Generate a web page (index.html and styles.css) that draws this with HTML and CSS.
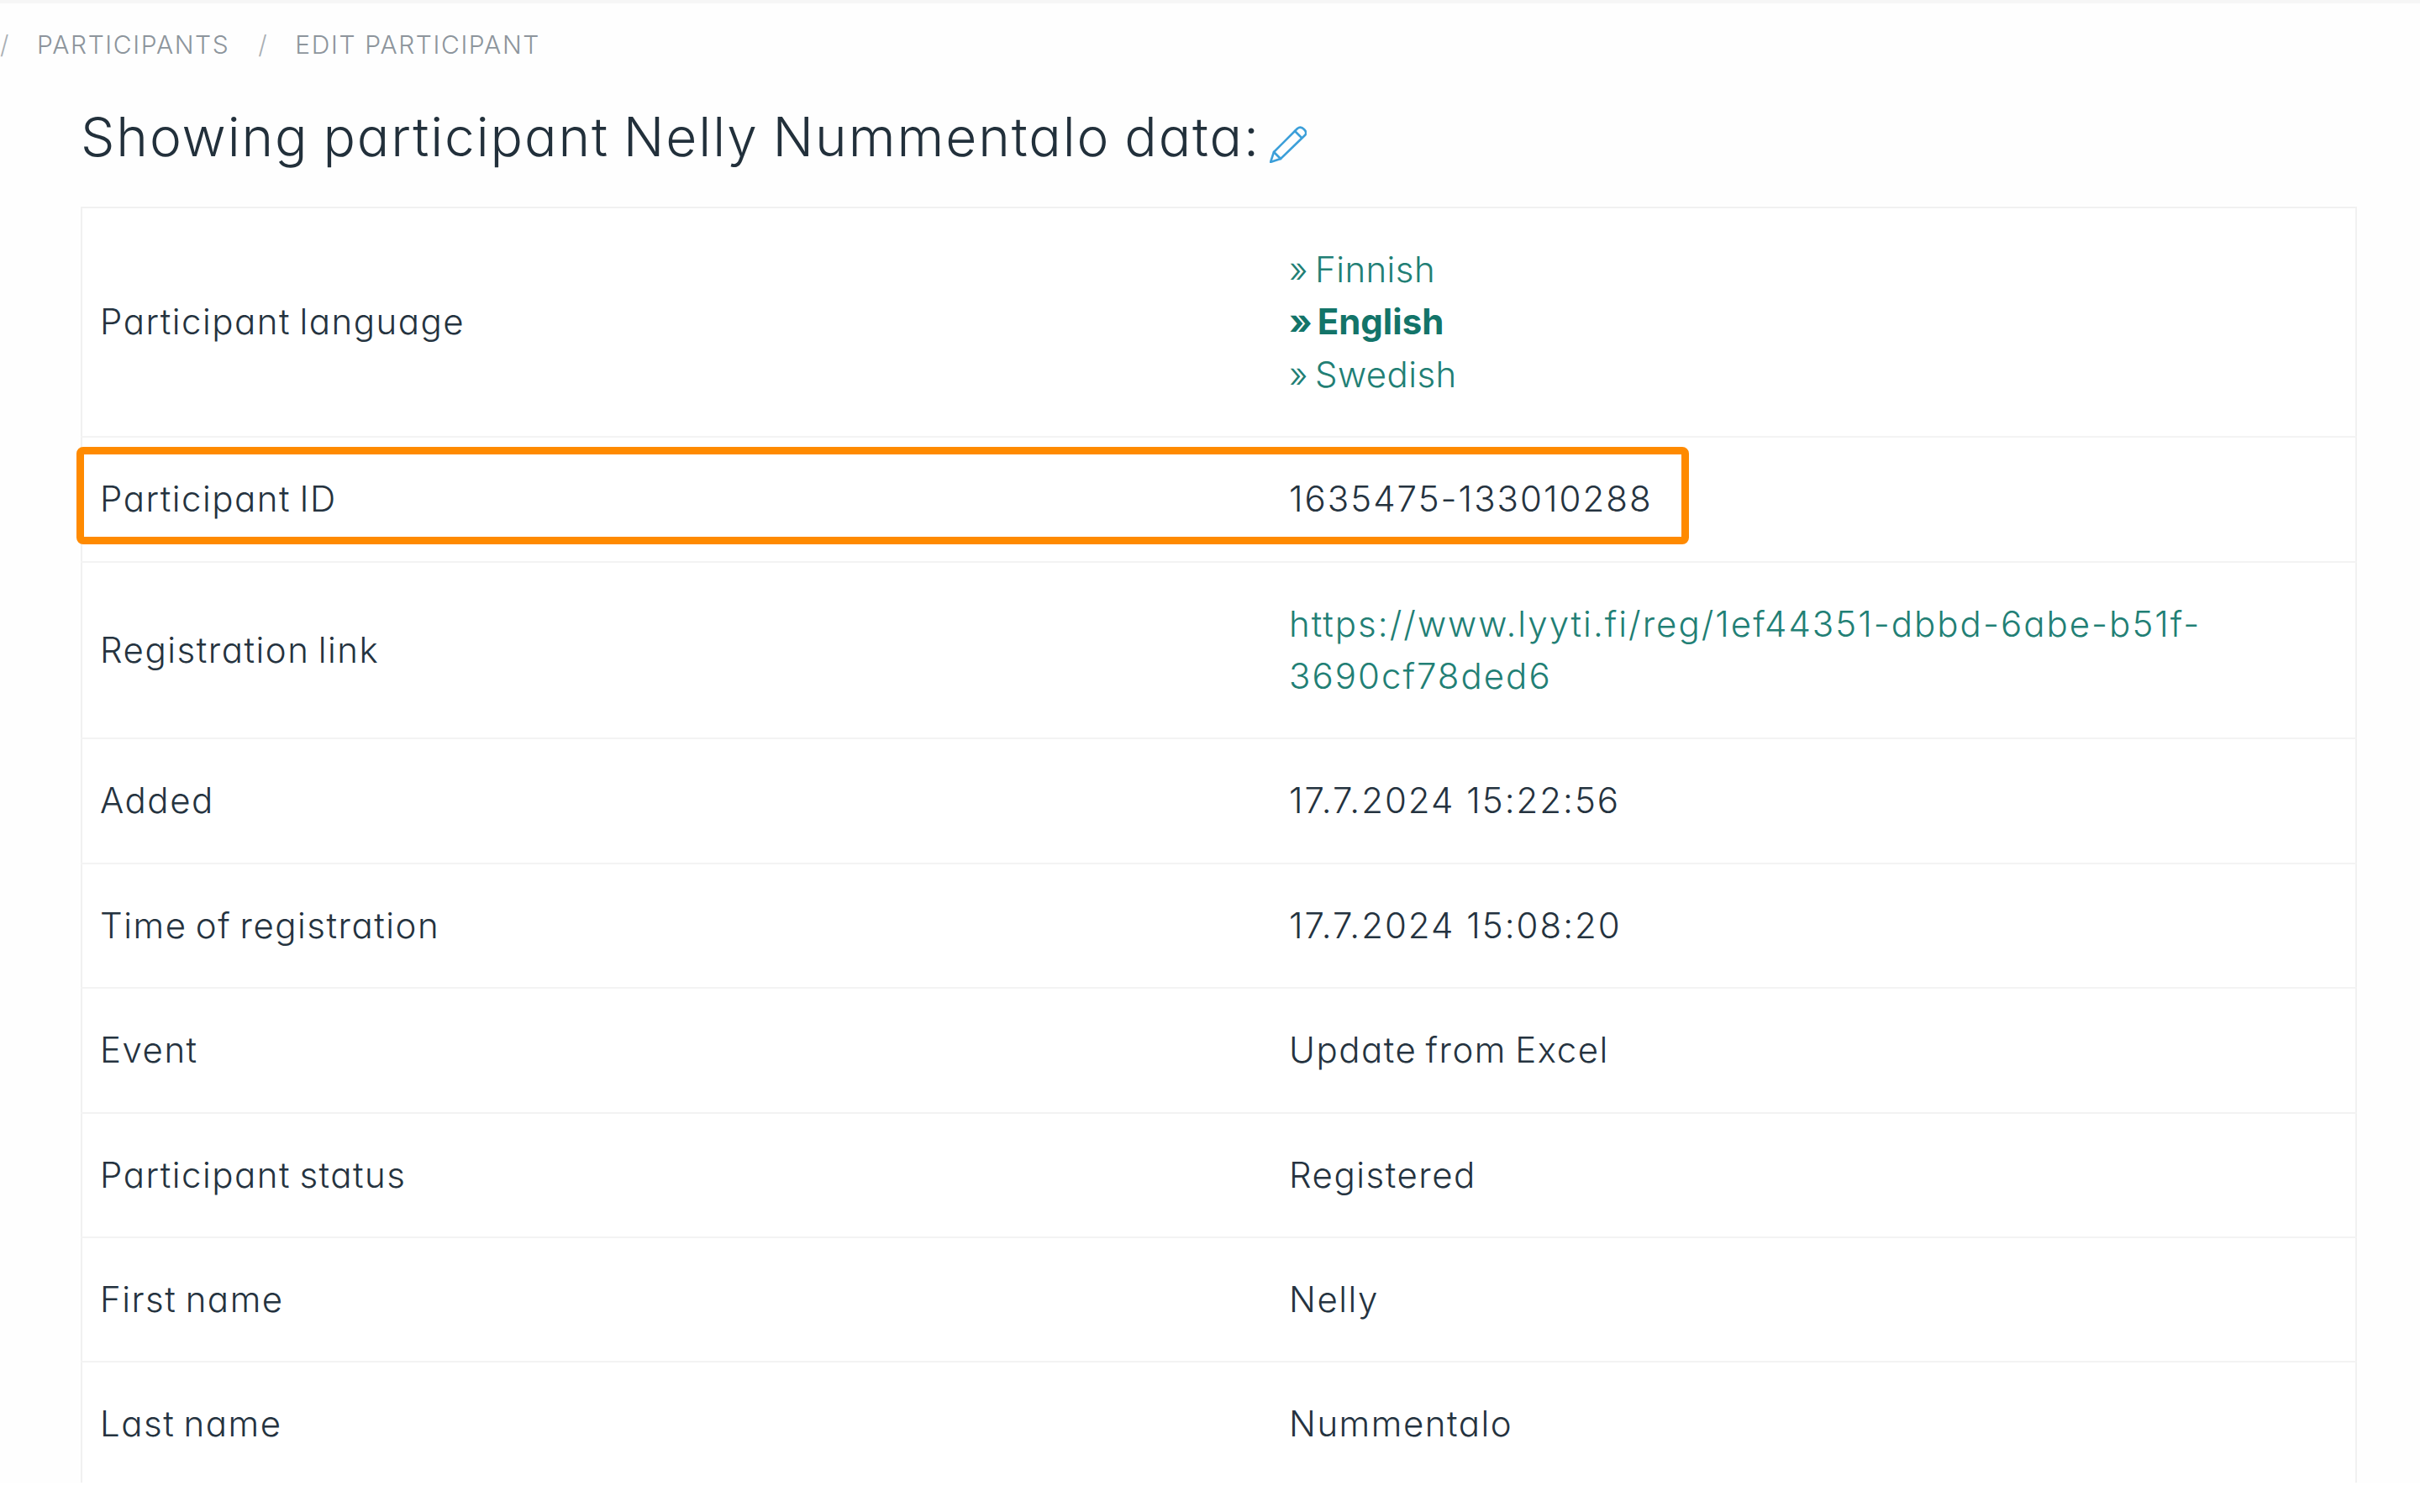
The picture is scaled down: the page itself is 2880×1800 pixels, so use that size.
FILE: index.html
```html
<!DOCTYPE html>
<html lang="en">
<head>
<meta charset="utf-8">
<title>Edit participant</title>
<link rel="stylesheet" href="styles.css">
</head>
<body>
<div class="page">
  <nav class="crumbs">
    <span class="sep">/</span><a class="crumb">PARTICIPANTS</a>
    <span class="sep">/</span><a class="crumb">EDIT PARTICIPANT</a>
  </nav>
  <h1 class="title">Showing participant Nelly Nummentalo data:
    <svg class="pencil" viewBox="0 0 44 44" fill="none" stroke="#3c9fd9" stroke-width="2.6" stroke-linejoin="round" stroke-linecap="round">
      <path d="M1 43 L5 31 L33 3 Q37 0 41 4 Q45 8 42 11 L13 39 Z"/>
      <path d="M5 31 L13 39"/>
      <path d="M30 6 L38 14"/>
    </svg>
  </h1>
  <table class="data">
    <tr>
      <td class="label">Participant language</td>
      <td>
        <a class="lang">» Finnish</a>
        <a class="lang active">» English</a>
        <a class="lang">» Swedish</a>
      </td>
    </tr>
    <tr>
      <td class="label">Participant ID</td>
      <td class="num">1635475-133010288</td>
    </tr>
    <tr>
      <td class="label">Registration link</td>
      <td><a class="link">https://www.lyyti.fi/reg/1ef44351-dbbd-6abe-b51f-3690cf78ded6</a></td>
    </tr>
    <tr><td class="label">Added</td><td class="num">17.7.2024 15:22:56</td></tr>
    <tr><td class="label">Time of registration</td><td class="num">17.7.2024 15:08:20</td></tr>
    <tr><td class="label">Event</td><td>Update from Excel</td></tr>
    <tr><td class="label">Participant status</td><td>Registered</td></tr>
    <tr><td class="label">First name</td><td>Nelly</td></tr>
    <tr><td class="label">Last name</td><td>Nummentalo</td></tr>
  </table>
  <div class="highlight"></div>
</div>
</body>
</html>
```
FILE: styles.css
```css
* { box-sizing: border-box; }
html, body { margin: 0; padding: 0; background: #fff; }
body { font-family: Inter, Lato, sans-serif; font-feature-settings: "cv11"; font-weight: 350; color: #25333f; overflow: hidden; height: 1800px; }
.page { position: relative; height: 1765px; overflow: hidden; border-top: 4px solid #f6f6f6; background: #fefefe; }
.crumbs { display: flex; align-items: center; height: 30px; margin-top: 34px; font-size: 30px; letter-spacing: 1.6px; color: #8d959c; }
.sep { color: #a9afb4; width: 44px; }
.crumb { margin-right: 34px; }
.title { margin: 53px 0 0 96px; height: 125px; font-weight: 350; font-size: 64px; letter-spacing: 1.9px; word-spacing: -3px; line-height: 84px; color: #22303b; }
.pencil { width: 44px; height: 44px; margin-left: -6px; vertical-align: -8px; }
.data { margin-left: 96px; width: 2709px; border-collapse: collapse; table-layout: fixed; font-size: 42px; letter-spacing: 1.5px; word-spacing: -3px; line-height: 62.4px; background: #fff; border-top: 2px solid #f1f1f1; border-left: 2px solid #f1f1f1; border-right: 2px solid #f1f1f1; }
.data tr { border-bottom: 2px solid #f3f3f3; }
.data td { padding: 42px 100px 42px 22px; vertical-align: middle; }
.data td.label { width: 1415px; padding-left: 21px; }
.data td.num { letter-spacing: 2px; word-spacing: 0; }
.lang { display: block; color: #227f75; letter-spacing: 0.4px; word-spacing: -4px; }
.lang.active { font-weight: 700; color: #137469; letter-spacing: 0; }
.link { color: #227f75; letter-spacing: 2px; }
.highlight { position: absolute; left: 91px; top: 528px; width: 1919px; height: 116px; border: 9px solid #ff8a00; border-radius: 8px; }
```
